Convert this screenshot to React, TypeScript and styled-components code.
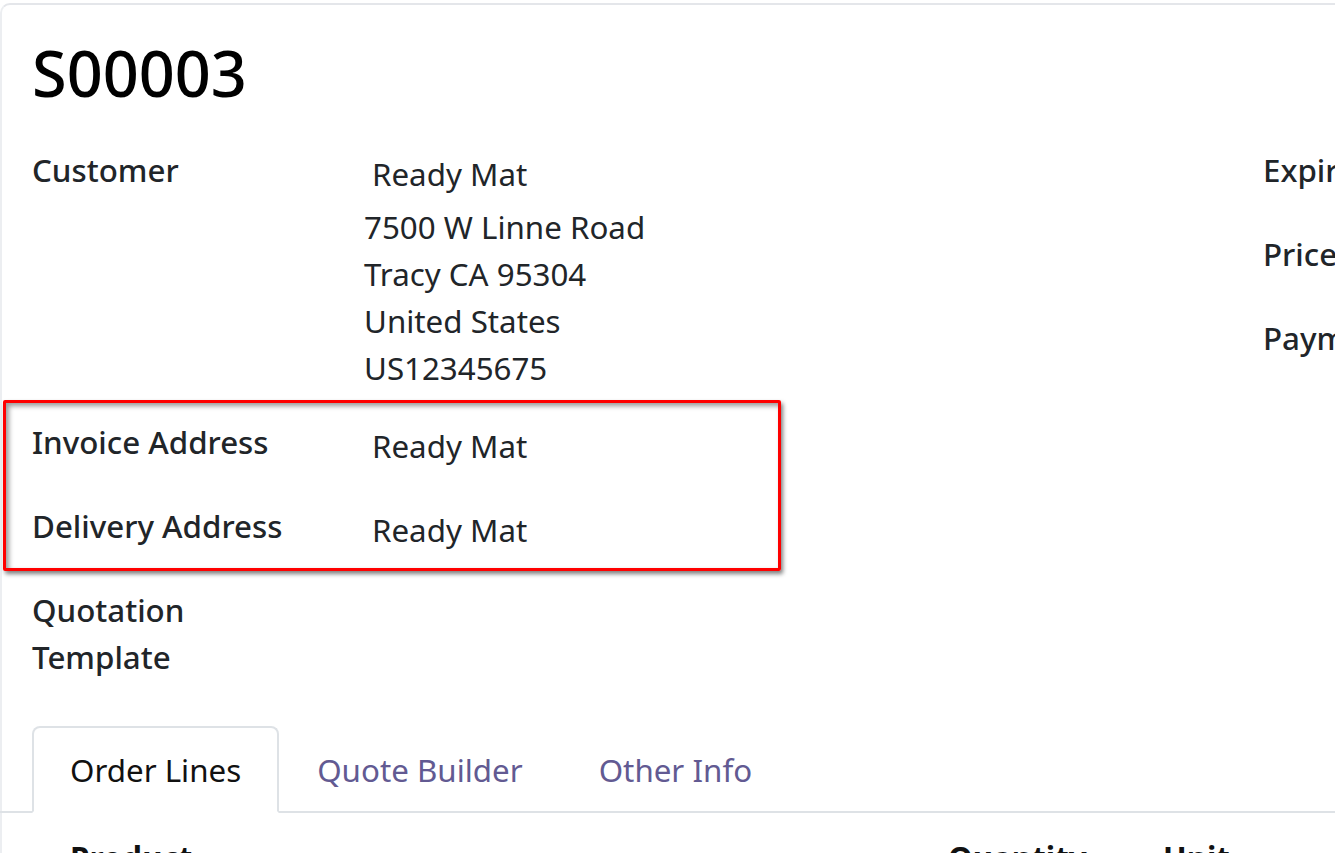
import React from "react";
import styled, { createGlobalStyle } from "styled-components";

const Global = createGlobalStyle`
  html, body {
    margin: 0;
    padding: 0;
    background: #ffffff;
    overflow: hidden;
  }
  body {
    font-family: "Noto Sans", "Open Sans", sans-serif;
    color: #212529;
    width: 1335px;
    height: 853px;
  }
`;

const Sheet = styled.div`
  margin-top: 3px;
  width: 1900px;
  border-top: 2px solid #e4e6ea;
  border-left: 2px solid #eceef1;
  border-top-left-radius: 10px;
  padding: 30px 0 0 30px;
  box-sizing: border-box;
  background: #fff;
`;

const Title = styled.h1`
  margin: 0;
  font-size: 63px;
  line-height: 76.8px;
  font-weight: 500;
  color: #000;
`;

const FormGrid = styled.div`
  display: grid;
  grid-template-columns: 1231px 1fr;
  margin-top: 35.5px;
`;

const Group = styled.div`
  display: flex;
  flex-direction: column;
  gap: 27px;
`;

const Row = styled.div`
  display: grid;
  grid-template-columns: 332px 1fr;
  align-items: start;
`;

const Label = styled.div<{ $nowrap?: boolean }>`
  font-size: 31.3px;
  line-height: 47px;
  font-weight: 500;
  color: #212529;
  max-width: 290px;
  white-space: ${(p) => (p.$nowrap ? "nowrap" : "normal")};
`;

const Value = styled.div`
  display: flex;
  flex-direction: column;
  font-size: 31.3px;
  line-height: 47px;
  color: #212529;
`;

const Field = styled.div`
  padding: 4px 8px 6px;
  min-height: 47px;
`;

const AddressLine = styled.div``;

const Highlight = styled.div`
  position: relative;
  display: flex;
  flex-direction: column;
  gap: 27px;
`;

const RedBox = styled.div`
  position: absolute;
  top: -19px;
  left: -29px;
  width: 778px;
  bottom: -11px;
  box-sizing: border-box;
  border: 3px solid #ff0000;
  border-radius: 2px;
  box-shadow: 2px 3px 4px rgba(0, 0, 0, 0.5),
    inset 3px 3px 5px rgba(0, 0, 0, 0.4);
  pointer-events: none;
`;

const Tabs = styled.div`
  display: flex;
  margin: 44.5px 0 0 -32px;
  padding-left: 32px;
  border-bottom: 2px solid #dee2e6;
`;

const Tab = styled.div<{ $active?: boolean }>`
  font-size: 31.3px;
  line-height: 47px;
  padding: 19.5px 36px 16.5px;
  margin-bottom: -2px;
  border: 2px solid ${(p) => (p.$active ? "#dee2e6" : "transparent")};
  border-bottom-color: ${(p) => (p.$active ? "#ffffff" : "transparent")};
  border-radius: 8px 8px 0 0;
  color: ${(p) => (p.$active ? "#111111" : "#625a92")};
  background: ${(p) => (p.$active ? "#ffffff" : "transparent")};
`;

const TableHead = styled.div`
  display: grid;
  grid-template-columns: 878px 215px 200px;
  padding: 22px 0 0 38px;
  font-size: 31.3px;
  line-height: 47px;
  font-weight: 700;
  color: #111;
`;

export default function App() {
  return (
    <>
      <Global />
      <Sheet>
        <Title>S00003</Title>
        <FormGrid>
          <Group>
            <Row>
              <Label>Customer</Label>
              <Value>
                <Field>Ready Mat</Field>
                <AddressLine>7500 W Linne Road</AddressLine>
                <AddressLine>Tracy CA 95304</AddressLine>
                <AddressLine>United States</AddressLine>
                <AddressLine>US12345675</AddressLine>
              </Value>
            </Row>
            <Highlight>
              <Row>
                <Label>Invoice Address</Label>
                <Value>
                  <Field>Ready Mat</Field>
                </Value>
              </Row>
              <Row>
                <Label>Delivery Address</Label>
                <Value>
                  <Field>Ready Mat</Field>
                </Value>
              </Row>
              <RedBox />
            </Highlight>
            <Row>
              <Label>Quotation Template</Label>
              <Value>
                <Field />
              </Value>
            </Row>
          </Group>
          <Group>
            <Row>
              <Label $nowrap>Expiration</Label>
              <Value>
                <Field />
              </Value>
            </Row>
            <Row>
              <Label $nowrap>Pricelist</Label>
              <Value>
                <Field />
              </Value>
            </Row>
            <Row>
              <Label $nowrap>Payment Terms</Label>
              <Value>
                <Field />
              </Value>
            </Row>
          </Group>
        </FormGrid>
        <Tabs>
          <Tab $active>Order Lines</Tab>
          <Tab>Quote Builder</Tab>
          <Tab>Other Info</Tab>
        </Tabs>
        <TableHead>
          <div>Product</div>
          <div>Quantity</div>
          <div>Unit</div>
        </TableHead>
      </Sheet>
    </>
  );
}
